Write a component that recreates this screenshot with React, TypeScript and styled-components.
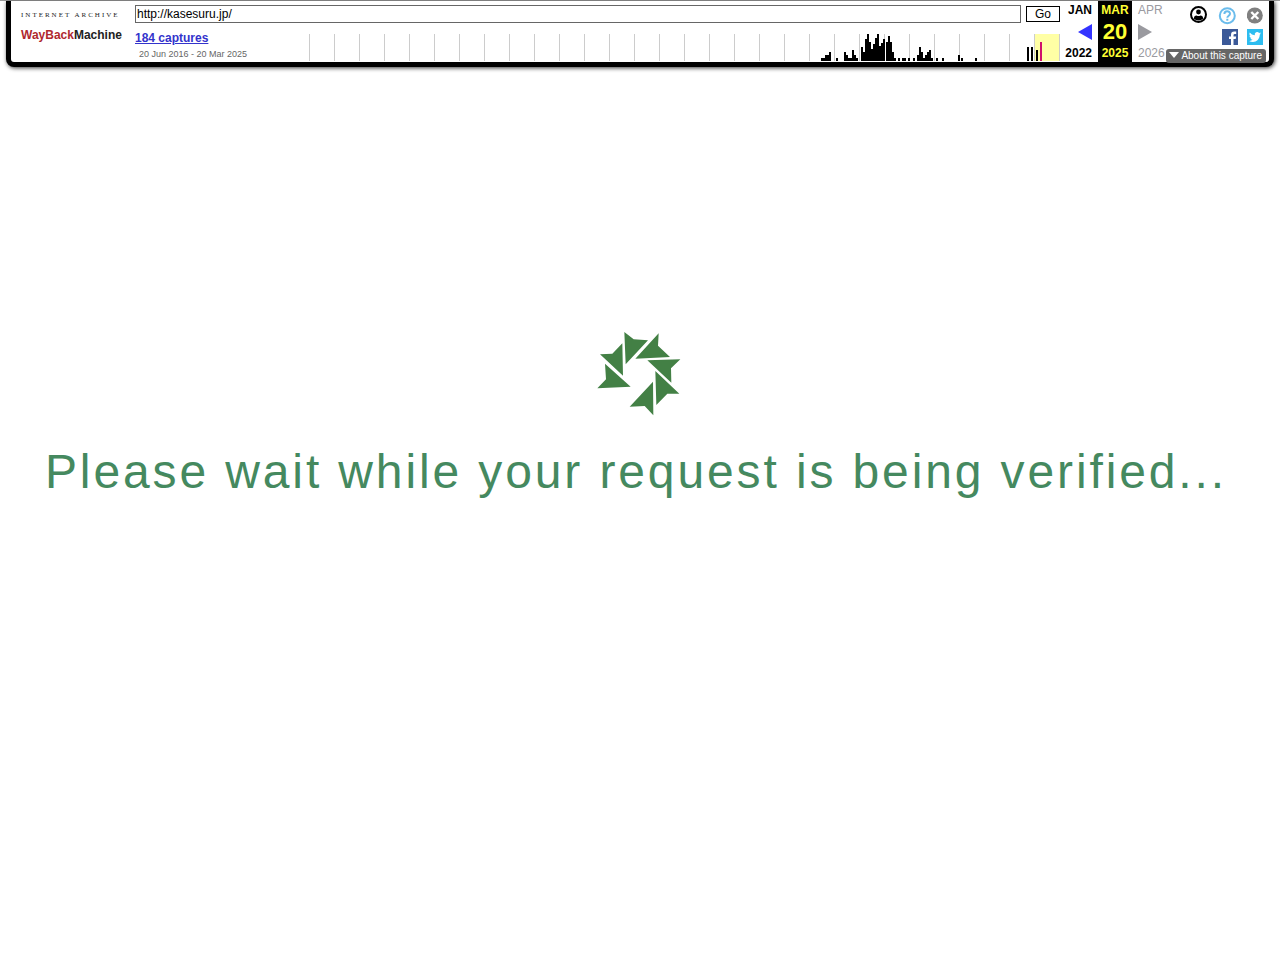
import React from "react";
import styled, { createGlobalStyle, css } from "styled-components";

const GlobalStyle = createGlobalStyle`
  * { box-sizing: border-box; }
  body {
    margin: 0;
    background: #fff;
    font-family: "Liberation Sans", Arial, sans-serif;
  }
`;

const TopRule = styled.div`
  height: 1px;
  background: #999;
`;

const Toolbar = styled.header`
  display: flex;
  height: 66px;
  margin: 0 6px;
  background: #fff;
  border: 5px solid #000;
  border-top: 0;
  border-radius: 0 0 8px 8px;
  box-shadow: 1px 1px 4px #333;
  font-size: 12px;
`;

const Brand = styled.a`
  display: flex;
  flex-direction: column;
  flex: none;
  width: 124px;
  padding: 10px 0 0 10px;
  color: #222;
  text-decoration: none;
`;

const BrandOwner = styled.span`
  font: 7px/9px "Liberation Serif", serif;
  letter-spacing: 2px;
  white-space: nowrap;
`;

const BrandName = styled.span`
  font: bold 12px/30px "Liberation Sans", Arial, sans-serif;
  white-space: nowrap;
`;

const BrandAccent = styled.span`
  color: #b0282e;
`;

const Main = styled.div`
  flex: 1;
  min-width: 0;
  padding-top: 4px;
`;

const SearchForm = styled.form`
  display: flex;
  gap: 5px;
`;

const UrlInput = styled.input`
  flex: 1;
  min-width: 0;
  height: 18px;
  padding: 0 1px;
  border: 1px solid #666;
  border-radius: 0;
  background: #fff;
  color: #000;
  font: 12px "Liberation Sans", Arial, sans-serif;
`;

const GoButton = styled.button`
  width: 34px;
  height: 16px;
  margin-top: 1px;
  padding: 0;
  border: 1px solid #000;
  background: #fff;
  color: #000;
  font: 12px/14px "Liberation Sans", Arial, sans-serif;
`;

const History = styled.div`
  display: flex;
  justify-content: space-between;
  padding-top: 8px;
`;

const Captures = styled.div`
  flex: none;
`;

const CapturesLink = styled.a`
  display: block;
  color: #33c;
  font-weight: bold;
  line-height: 14px;
`;

const CapturesRange = styled.div`
  padding: 3px 0 0 4px;
  color: #666;
  font-size: 9px;
  line-height: 12px;
  white-space: nowrap;
`;

const Chart = styled.svg`
  flex: none;
  margin-top: 3px;
`;

const Calendar = styled.nav`
  display: flex;
  flex: none;
`;

const Period = styled.div<{ $tone: "past" | "current" | "future" }>`
  display: flex;
  flex-direction: column;
  justify-content: space-between;
  height: 61px;
  padding: 2px 0;
  line-height: 14px;
  font-weight: bold;

  ${({ $tone }) =>
    $tone === "past" &&
    css`
      width: 38px;
      padding-right: 6px;
      align-items: flex-end;
      color: #000;
    `}
  ${({ $tone }) =>
    $tone === "current" &&
    css`
      width: 34px;
      align-items: center;
      background: #000;
      color: #ff3;
    `}
  ${({ $tone }) =>
    $tone === "future" &&
    css`
      width: 34px;
      padding-left: 6px;
      align-items: flex-start;
      color: #9a9a9f;
      font-weight: normal;
    `}
`;

const PeriodLink = styled.a`
  color: inherit;
  text-decoration: none;
`;

const ArrowLink = styled.a`
  display: flex;
`;

const Day = styled.strong`
  font-size: 22px;
  line-height: 24px;
`;

const Tools = styled.div`
  display: flex;
  flex: none;
  flex-direction: column;
  align-items: flex-end;
  width: 103px;
  padding: 6px 3px 0 0;
`;

const ToolRow = styled.div<{ $gap: number }>`
  display: flex;
  gap: ${({ $gap }) => $gap}px;
  padding-right: 3px;
  margin-bottom: 4px;
`;

const IconButton = styled.button`
  display: flex;
  padding: 0;
  border: 0;
  background: none;
`;

const IconLink = styled.a`
  display: flex;
`;

const AboutButton = styled.button`
  display: flex;
  align-items: center;
  gap: 2px;
  height: 14px;
  padding: 0 4px 0 3px;
  border: 0;
  border-radius: 3px;
  background: #666;
  color: #fff;
  font: 10px/14px "Liberation Sans", Arial, sans-serif;
  white-space: nowrap;
`;

const Verify = styled.main`
  display: flex;
  flex-direction: column;
  align-items: center;
  padding: 265px 8px 0 6px;
`;

const Message = styled.h1`
  margin: 28px 0 0;
  padding-right: 6px;
  color: #45895f;
  font-size: 48px;
  font-weight: normal;
  letter-spacing: 0.06em;
  line-height: 56px;
  text-align: center;
`;

// Monthly capture counts: [x, height]
const BARS: [number, number][] = [
  [512, 3], [514, 3], [516, 6], [518, 6], [520, 9], [527, 3],
  [535, 9], [537, 6], [539, 3], [541, 3], [543, 11], [545, 6], [547, 3],
  [552, 14], [554, 9], [556, 22], [558, 27], [560, 19], [562, 12],
  [564, 17], [566, 23], [568, 27], [570, 15], [572, 18], [574, 22],
  [577, 19], [579, 25], [581, 19], [583, 9], [585, 3], [589, 3],
  [593, 3], [595, 3], [599, 3], [604, 3], [608, 6], [610, 14], [612, 9],
  [614, 3], [616, 6], [618, 9], [620, 11], [622, 3], [627, 3], [633, 3],
  [649, 6], [652, 3], [666, 3], [718, 14], [722, 14], [727, 11],
];

const YEAR_LINES = Array.from({ length: 31 }, (_, i) => i * 25);

function CaptureChart() {
  return (
    <Chart width="751" height="27" viewBox="0 0 751 27" shapeRendering="crispEdges" role="img" aria-label="Captures per month">
      <rect x="725" width="25" height="27" fill="#ffffa5" />
      {YEAR_LINES.map((x) => (
        <rect key={x} x={x} width="1" height="27" fill="#ccc" />
      ))}
      {BARS.map(([x, h]) => (
        <rect key={x} x={x} y={27 - h} width="2" height={h} fill="#000" />
      ))}
      <rect x="731" y="8" width="2" height="19" fill="#d0106c" />
    </Chart>
  );
}

function Spinner() {
  return (
    <svg width="84" height="84" viewBox="21 21 252 252" fill="#438045" aria-hidden="true">
      <path d="M103 21 131 43 174 46 107 118Z" />
      <path d="M206 25 204 62 240 96 136 101Z" />
      <path d="M271 103 243 130 244 173 172 106Z" />
      <path d="M196 138 268 206 232 206 199 240Z" />
      <path d="M189 170 190 271 164 243 119 245Z" />
      <path d="M45 116 122 185 22 190 48 163Z" />
      <path d="M97 55 99 152 30 88 67 86Z" />
    </svg>
  );
}

export default function App() {
  return (
    <>
      <GlobalStyle />
      <TopRule />
      <Toolbar>
        <Brand href="#">
          <BrandOwner>INTERNET ARCHIVE</BrandOwner>
          <BrandName>
            <BrandAccent>WayBack</BrandAccent>Machine
          </BrandName>
        </Brand>
        <Main>
          <SearchForm onSubmit={(e) => e.preventDefault()}>
            <UrlInput type="text" aria-label="URL" defaultValue="http://kasesuru.jp/" />
            <GoButton type="submit">Go</GoButton>
          </SearchForm>
          <History>
            <Captures>
              <CapturesLink href="#">184 captures</CapturesLink>
              <CapturesRange>20 Jun 2016 - 20 Mar 2025</CapturesRange>
            </Captures>
            <CaptureChart />
          </History>
        </Main>
        <Calendar aria-label="Captures by date">
          <Period $tone="past">
            <PeriodLink href="#">JAN</PeriodLink>
            <ArrowLink href="#" aria-label="Previous capture">
              <svg width="14" height="16" viewBox="0 0 14 16"><path d="M14 0v16L0 8Z" fill="#33f" /></svg>
            </ArrowLink>
            <PeriodLink href="#">2022</PeriodLink>
          </Period>
          <Period $tone="current">
            <span>MAR</span>
            <Day>20</Day>
            <span>2025</span>
          </Period>
          <Period $tone="future">
            <span>APR</span>
            <svg width="14" height="16" viewBox="0 0 14 16" aria-hidden="true"><path d="M0 0v16l14-8Z" fill="#9a9a9f" /></svg>
            <span>2026</span>
          </Period>
        </Calendar>
        <Tools>
          <ToolRow $gap={11}>
            <IconButton type="button" aria-label="Sign in">
              <svg width="18" height="18" viewBox="0 0 18 18" overflow="visible">
                <circle cx="9.5" cy="7.5" r="7.5" fill="#fff" stroke="#000" strokeWidth="2" />
                <circle cx="9.500" cy="5" r="2.400" />
                <path d="M4.900 11.800q0-3.300 2.700-3.300 1.900 1 3.800 0 2.700 0 2.700 3.300-1.800 1.600-4.600 1.600t-4.600-1.600Z" />
              </svg>
            </IconButton>
            <IconLink href="#" aria-label="Help">
              <svg width="18" height="18" viewBox="0 0 18 18" fill="none" stroke="#6bbcec" strokeWidth="2">
                <circle cx="9.300" cy="8.700" r="7.500" />
                <path d="M6.400 7c0-3.600 5.600-3.500 5.600-.3 0 2-2.700 2-2.700 4.100M9.300 11.800v2" />
              </svg>
            </IconLink>
            <IconButton type="button" aria-label="Close the toolbar">
              <svg width="16" height="18" viewBox="0 0 16 18">
                <circle cx="7.800" cy="8.500" r="8" fill="#808080" />
                <path d="m4.300 5 7 7m0-7-7 7" stroke="#fff" strokeWidth="2.400" />
              </svg>
            </IconButton>
          </ToolRow>
          <ToolRow $gap={9}>
            <IconLink href="#" aria-label="Share on Facebook">
              <svg width="16" height="16" viewBox="0 0 16 16">
                <path d="M0 0h16v16H0Z" fill="#3b5998" />
                <path d="M9 16v-6H7V7.600h2V5.900Q9 2.600 12.200 2.600h2V5h-1.400q-1.300 0-1.300 1.200v1.400h2.600l-.4 2.400h-2.200v6Z" fill="#fff" />
              </svg>
            </IconLink>
            <IconLink href="#" aria-label="Share on Twitter">
              <svg width="16" height="16" viewBox="0 0 16 16">
                <path d="M0 0h16v16H0Z" fill="#2dbdf0" />
                <path d="M14 4.300q-.6.300-1.400.4.800-.5 1.100-1.400-.7.500-1.600.6a2.500 2.500 0 0 0-4.300 2.300Q4.700 6.100 2.700 3.600q-1.100 2 .8 3.300-.6 0-1.100-.3 0 2 2 2.500-.6.100-1.100 0 .5 1.600 2.300 1.700Q4 12.100 2 11.900c5 3 10.800-.3 10.800-6.300q.8-.5 1.200-1.300Z" fill="#fff" />
              </svg>
            </IconLink>
          </ToolRow>
          <AboutButton type="button">
            <svg width="10" height="8" viewBox="0 0 10 8" aria-hidden="true"><path d="M0 0h10L5 6Z" fill="#fff" /></svg>
            About this capture
          </AboutButton>
        </Tools>
      </Toolbar>
      <Verify>
        <Spinner />
        <Message>Please wait while your request is being verified...</Message>
      </Verify>
    </>
  );
}
